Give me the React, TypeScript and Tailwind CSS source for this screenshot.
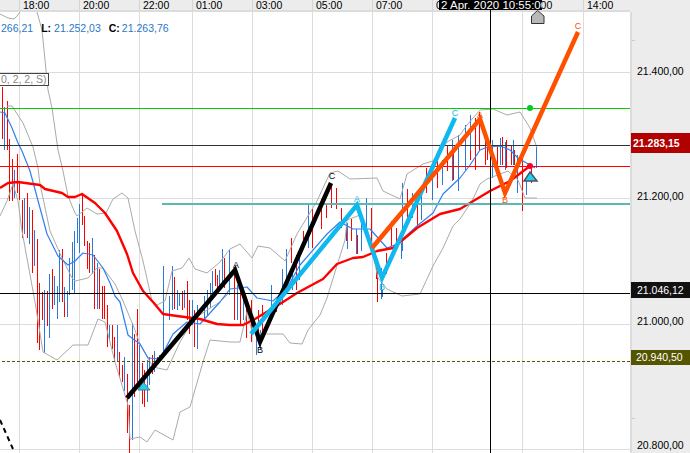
const redBars = [
  [2, 87, 139], [7, 101, 150], [9, 139, 201], [12, 159, 201], [17, 154, 193], [19, 183, 200], [22, 200, 238], [27, 193, 238],
  [32, 210, 273], [37, 239, 343], [39, 283, 350], [42, 292, 320], [47, 291, 326], [52, 269, 309], [62, 249, 302], [64, 300, 317],
  [82, 194, 225], [84, 216, 246], [87, 241, 269], [89, 243, 273], [94, 255, 309], [99, 269, 309], [102, 286, 319], [104, 286, 319],
  [107, 305, 347], [112, 325, 349], [114, 337, 362], [119, 352, 377], [122, 365, 382], [127, 374, 433], [129, 405, 453], [134, 334, 397],
  [137, 309, 382], [142, 363, 404], [144, 370, 407], [152, 355, 374], [157, 357, 365], [174, 277, 309], [182, 291, 310], [187, 281, 320],
  [189, 300, 334], [194, 310, 347], [215, 269, 286], [217, 275, 292], [224, 258, 288], [234, 275, 320], [240, 282, 325], [246, 300, 338],
  [251, 300, 342], [258, 310, 335], [262, 305, 340], [271, 300, 320], [276, 300, 312], [291, 238, 263], [296, 255, 290], [303, 231, 248],
  [312, 209, 248], [321, 199, 229], [326, 203, 218], [331, 184, 208], [336, 188, 209], [341, 208, 228], [346, 223, 241], [351, 219, 241],
  [357, 235, 254], [371, 208, 246], [376, 258, 279], [377, 271, 302], [386, 253, 274], [391, 221, 246], [396, 228, 246], [407, 189, 218],
  [417, 192, 225], [426, 168, 193], [437, 158, 188], [447, 146, 171], [453, 150, 180], [470, 127, 160], [475, 118, 170], [479, 112, 150],
  [485, 130, 165], [487, 145, 160], [497, 145, 170], [502, 137, 165], [506, 140, 168], [511, 145, 165], [514, 150, 165], [522, 150, 211],
  [531, 165, 183],
]

const blueBars = [
  [4, 107, 150], [14, 170, 198], [24, 198, 234], [29, 207, 244], [34, 230, 266], [44, 290, 353], [49, 274, 338], [54, 276, 305],
  [57, 286, 319], [59, 250, 302], [64, 287, 302], [67, 291, 317], [69, 258, 295], [72, 242, 290], [74, 231, 294], [77, 218, 243],
  [79, 204, 253], [92, 238, 274], [97, 263, 309], [109, 325, 340], [117, 325, 362], [124, 357, 391], [132, 323, 440], [139, 345, 390],
  [147, 360, 402], [149, 357, 385], [154, 351, 372], [159, 355, 362], [163, 266, 357], [169, 296, 320], [172, 266, 310], [177, 290, 310],
  [179, 294, 306], [184, 290, 308], [192, 300, 325], [197, 305, 349], [204, 296, 320], [207, 290, 315], [210, 283, 308], [212, 271, 300],
  [219, 270, 290], [222, 249, 285], [229, 250, 295], [237, 285, 320], [243, 295, 320], [256, 333, 355], [260, 330, 350], [271, 285, 310],
  [282, 269, 305], [286, 249, 284], [292, 270, 290], [299, 249, 280], [308, 204, 248], [347, 223, 249], [356, 229, 254], [361, 214, 251],
  [366, 198, 238], [381, 268, 299], [382, 290, 297], [401, 243, 259], [402, 183, 251], [412, 193, 218], [421, 194, 220], [432, 170, 200],
  [442, 160, 185], [452, 140, 181], [458, 135, 191], [465, 125, 170], [470, 115, 150], [492, 140, 178], [500, 138, 165], [505, 142, 170],
  [513, 140, 165], [517, 155, 193], [526, 181, 195], [536, 145, 168],
]

const topLeftBand = "0,14 8,18 14,19 17,16 20,12"
const upperBand =
  "37,12 42,30 48,90 52,108 58,150 63,171 68,196 75,213 77,216 87,208 97,214 106,213 113,199 122,193 128,198 135,231 143,261 152,301 157,305 165,301 172,271 182,268 189,258 195,269 207,273 220,262 230,249 240,244 252,258 258,246 270,248 285,261 297,234 317,201 330,173 338,171 350,179 377,178 383,191 400,199 407,174 423,164 433,161 447,142 460,135 467,125 480,110 493,109 507,115 520,112 530,128 537,148"
const midBand =
  "7,106 12,106 23,123 33,147 38,168 40,184 50,231 62,258 72,278 75,281 88,278 97,268 103,268 115,284 123,301 133,325 140,344 153,367 167,370 180,342 193,320 207,310 220,302 230,292"
const lowerBand =
  "0,216 7,201 13,184 18,201 22,231 33,291 35,302 43,352 57,360 73,345 88,345 98,319 105,322 115,362 128,405 130,439 140,437 147,442 155,430 173,440 180,412 190,407 203,362 210,340 230,342 240,342 247,312 252,331 263,334 283,334 290,343 302,344 308,330 320,315 327,298 335,272 345,240 347,220 360,215 370,241 378,278 387,289 402,296 420,294 433,266 443,248 453,226 460,219 472,201 480,184 487,179 508,171 518,180 525,198 537,198"
const blueMa =
  "0,112 5,113 12,128 18,143 22,151 30,171 40,208 47,234 58,256 68,265 75,261 83,253 93,255 103,268 110,283 115,296 120,302 128,335 133,339 140,344 148,358 160,359 173,334 187,322 200,324 220,302 230,289 247,287 257,298 273,301 287,288 300,265 327,234 340,222 353,229 370,229 387,248 397,244 417,226 433,213 443,194 460,178 470,165 480,150 488,147 500,146 510,150 518,158 535,168"
const redMa =
  "0,188 8,183 18,182 40,185 45,189 62,193 68,197 75,197 82,194 95,203 105,213 117,231 127,254 133,273 143,291 153,302 163,314 177,316 200,319 217,324 230,325 243,325 255,319 283,302 297,293 323,279 337,264 353,258 363,257 377,251 393,248 417,228 440,214 460,209 490,191 510,181 530,166"

const gridX = [19, 79, 139, 192, 252, 312, 372, 432, 522, 583]
const gridY = [72, 198, 324, 449]

const times = [
  { label: "18:00", w: "w-[60px]" },
  { label: "20:00", w: "w-[60px]" },
  { label: "22:00", w: "w-[53px]" },
  { label: "01:00", w: "w-[60px]" },
  { label: "03:00", w: "w-[60px]" },
  { label: "05:00", w: "w-[60px]" },
  { label: "07:00", w: "w-[60px]" },
  { label: "09:00", w: "w-[90px]" },
  { label: "12:00", w: "w-[61px]" },
  { label: "14:00", w: "w-[47px]" },
]

const labelFont = { fontFamily: "Liberation Sans, sans-serif", fontSize: 9 }

const Poly = ({ d, stroke, width }: { d: string; stroke: string; width: number }) => (
  <polyline points={d} fill="none" stroke={stroke} strokeWidth={width} strokeLinejoin="round" />
)

const Chart = () => (
  <svg width="630" height="441" viewBox="0 12 630 441" className="block overflow-visible shrink-0">
    <g stroke="#dcdcdc" strokeWidth="1" shapeRendering="crispEdges">
      {gridX.map((x) => (
        <line key={x} x1={x + 0.5} x2={x + 0.5} y1="12" y2="453" />
      ))}
      {gridY.map((y) => (
        <line key={y} x1="0" x2="630" y1={y + 0.5} y2={y + 0.5} />
      ))}
    </g>

    <g strokeWidth="1" shapeRendering="crispEdges">
      {redBars.map(([x, a, b], i) => (
        <line key={i} x1={x + 0.5} x2={x + 0.5} y1={a} y2={b} stroke="#ff0000" />
      ))}
      {blueBars.map(([x, a, b], i) => (
        <line key={i} x1={x + 0.5} x2={x + 0.5} y1={a} y2={b} stroke="#2a78d8" />
      ))}
    </g>

    <Poly d={topLeftBand} stroke="#aaaaaa" width={1} />
    <Poly d={upperBand} stroke="#aaaaaa" width={1} />
    <Poly d={midBand} stroke="#aaaaaa" width={1} />
    <Poly d={lowerBand} stroke="#aaaaaa" width={1} />
    <Poly d={blueMa} stroke="#2f80f0" width={1.2} />
    <Poly d={redMa} stroke="#ff0000" width={2.4} />

    <g shapeRendering="crispEdges" strokeWidth="1">
      <line x1="0" x2="630" y1="108.5" y2="108.5" stroke="#00cc00" />
      <line x1="0" x2="630" y1="145.5" y2="145.5" stroke="#333333" />
      <line x1="0" x2="630" y1="166.5" y2="166.5" stroke="#ff0000" />
      <line x1="0" x2="630" y1="293.5" y2="293.5" stroke="#000000" />
      <line x1="2" x2="630" y1="361.5" y2="361.5" stroke="#555500" strokeDasharray="3 2" />
      <line x1="162" x2="630" y1="204" y2="204" stroke="#5cb8b2" strokeWidth="2" />
      <line x1="490.5" x2="490.5" y1="10" y2="453" stroke="#000000" />
    </g>

    <path d="M0,420 L13,449" fill="none" stroke="#000000" strokeWidth="2" strokeDasharray="5 4" />

    <polygon points="143,382 150,390 138,390" fill="#20d0f0" stroke="#557788" strokeWidth="1" />
    <polyline points="127,398 235,270 260,342 331,183" fill="none" stroke="#000000" strokeWidth="4.5" />
    <polyline points="251,334 357,205 382,278 455,118" fill="none" stroke="#10b8f0" strokeWidth="4.5" />
    <polyline points="372,248 480,119 505,193 578,32" fill="none" stroke="#ff5000" strokeWidth="4.5" />

    <g textAnchor="middle" style={labelFont}>
      <text x="236" y="268" fill="#000000">A</text>
      <text x="260" y="353" fill="#000000">B</text>
      <text x="332" y="179" fill="#000000">C</text>
      <text x="357" y="202" fill="#10b8f0">A</text>
      <text x="382" y="290" fill="#10b8f0">B</text>
      <text x="455" y="116" fill="#10b8f0">C</text>
      <text x="480" y="118" fill="#ff5000">A</text>
      <text x="505" y="203" fill="#ff5000">B</text>
      <text x="578" y="29" fill="#ff5000">C</text>
    </g>

    <circle cx="530" cy="108" r="3" fill="#00cc22" />
    <circle cx="530" cy="166" r="3" fill="#ff0022" />
    <polygon points="530,172 537,181 524,181" fill="#20d0f0" stroke="#445566" strokeWidth="1.5" />
    <polygon points="537.5,10.5 544,16 544,23.5 531.5,23.5 531.5,16" fill="#b8b8b8" stroke="#333333" strokeWidth="1" />
  </svg>
)

export default function App() {
  return (
    <div className="relative flex h-[453px] w-[690px] flex-col overflow-hidden bg-white font-['Liberation_Sans',sans-serif] text-[10.5px] leading-none text-black">
      <div className="flex h-[12px] shrink-0 bg-[#ececec]">
        <div className="flex h-[12px] w-[630px] shrink-0 border-b-2 border-[#dcdcdc] pl-[19px]">
          {times.map((t) => (
            <div key={t.label} className={`${t.w} h-[10px] shrink-0 border-l border-[#d4d4d4] pl-[3px] leading-[11px]`}>
              {t.label}
            </div>
          ))}
        </div>
      </div>

      <div className="flex min-h-0 flex-1">
        <Chart />
        <div className="relative flex w-[60px] shrink-0 flex-col border-l-2 border-[#dcdcdc] bg-[#ececec]">
          <span className="absolute left-0 top-[28px] h-px w-[3px] bg-[#cccccc]" />
          <span className="absolute left-0 top-[406px] h-px w-[3px] bg-[#cccccc]" />
          <div className="mt-[52px] flex h-[15px] items-center pl-[5px]">21.400,00</div>
          <div className="-ml-px mt-[54px] flex h-[21px] items-center bg-[#b00000] pl-[2px] font-bold text-white">21.283,15</div>
          <div className="mt-[36px] flex h-[15px] items-center pl-[5px]">21.200,00</div>
          <div className="-ml-px mt-[78px] flex h-[16px] items-center bg-[#111111] pl-[6px] text-white">21.046,12</div>
          <div className="mt-[16px] flex h-[15px] items-center pl-[5px]">21.000,00</div>
          <div className="-ml-px mt-[22px] flex h-[15px] items-center bg-[#555500] pl-[5px] text-white">20.940,50</div>
          <div className="mt-[73px] flex h-[15px] shrink-0 items-center pl-[5px]">20.800,00</div>
        </div>
      </div>

      <div className="absolute left-[439px] top-0 h-[10px] w-[103px] overflow-hidden whitespace-nowrap bg-black pl-[2px] text-[11.5px] leading-[10px] text-white">
        2 Apr. 2020 10:55:00
      </div>

      <div className="absolute left-0 top-[22px] flex items-center text-[10.5px] leading-3 text-[#2a78c8]">
        <span className="ml-px">266,21</span>
        <b className="ml-[8px] text-black">L:</b>
        <span className="ml-[3px]">21.252,03</span>
        <b className="ml-[8px] text-black">C:</b>
        <span className="ml-[2px]">21.263,76</span>
      </div>

      <div className="absolute left-0 top-[73px] flex h-[13px] w-[49px] items-center border border-l-0 border-[#444444] bg-white pl-px text-[10.5px] text-[#888888]">
        0, 2, 2, S)
      </div>
    </div>
  )
}
